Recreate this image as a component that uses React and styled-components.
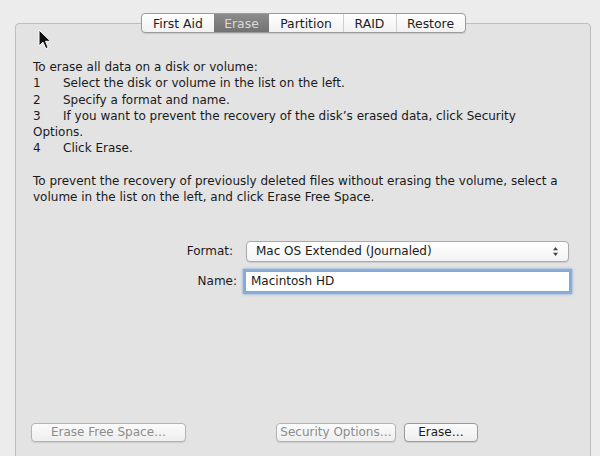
import React from 'react'
import styled, { createGlobalStyle } from 'styled-components'

const Global = createGlobalStyle`
    html, body {
        margin: 0;
        padding: 0;
        background: #ececec;
        overflow: hidden;
    }
    body {
        font-family: "DejaVu Sans", "Liberation Sans", sans-serif;
        color: #1a1a1a;
    }
`

const Page = styled.div`
    position: relative;
    width: 600px;
    height: 456px;
    padding: 13px 9px 0 15px;
    box-sizing: border-box;
    display: flex;
    flex-direction: column;
`

const TabBar = styled.div`
    display: flex;
    justify-content: center;
    margin-bottom: -10px;
    position: relative;
    z-index: 1;
`

const Segmented = styled.div`
    display: flex;
    height: 20px;
    border: 1px solid #9b9b9b;
    border-radius: 4px;
    background: linear-gradient(#ffffff, #f1f1f1);
    box-shadow: 0 1px 1px rgba(0, 0, 0, 0.12);
    overflow: hidden;
    box-sizing: border-box;
`

const Tab = styled.div`
    display: flex;
    align-items: center;
    justify-content: center;
    width: ${p => p.$w}px;
    font-size: 12.4px;
    color: ${p => (p.$active ? '#d9d9d9' : '#1c1c1c')};
    background: ${p => (p.$active ? 'linear-gradient(#8c8c8c, #727272)' : 'transparent')};
    border-left: 1px solid ${p => (p.$first || p.$active || p.$afterActive ? 'transparent' : '#cfcfcf')};
    box-sizing: border-box;
`

const Panel = styled.div`
    flex: 1;
    margin-bottom: -20px;
    border: 1px solid #bdbdbd;
    border-radius: 4px;
    background: #e3e3e3;
    padding: 35px 0 0 17px;
    display: flex;
    flex-direction: column;
`

const Info = styled.div`
    font-size: 12px;
    line-height: 16.3px;
    white-space: nowrap;
`

const Line = styled.div`
    min-height: 16.3px;
`

const Num = styled.span`
    display: inline-block;
    width: 30px;
`

const Form = styled.div`
    margin-top: 35px;
    display: grid;
    grid-template-columns: 200px 323px;
    column-gap: 13px;
    row-gap: 9px;
    align-items: center;
`

const Label = styled.div`
    font-size: 12px;
    text-align: right;
    margin-right: ${p => p.$shift || 0}px;
`

const Select = styled.div`
    height: 19px;
    border: 1px solid #a9a9a9;
    border-radius: 4px;
    background: linear-gradient(#ffffff, #f3f3f3);
    box-shadow: 0 1px 1px rgba(0, 0, 0, 0.1);
    display: flex;
    align-items: center;
    justify-content: space-between;
    padding: 0 9px 0 9px;
    font-size: 12px;
`

const Input = styled.div`
    height: 19px;
    margin-left: -1px;
    margin-right: -1px;
    border: 1px solid #8fa7c4;
    background: #ffffff;
    box-shadow: 0 0 1px 2px #86aedc, 0 0 3px 2px rgba(110, 150, 210, 0.6);
    display: flex;
    align-items: center;
    padding-left: 5px;
    font-size: 12px;
`

const Buttons = styled.div`
    margin-top: 131px;
    display: flex;
    align-items: center;
`

const Button = styled.div`
    width: ${p => p.$w}px;
    height: 19px;
    margin-left: ${p => p.$ml || 0}px;
    border: 1px solid ${p => (p.$disabled ? '#b3b3b3' : '#9a9a9a')};
    border-radius: 4px;
    background: linear-gradient(#fbfbfb, #eeeeee);
    box-shadow: 0 1px 1px rgba(0, 0, 0, 0.1);
    display: flex;
    align-items: center;
    justify-content: center;
    font-size: 12px;
    color: ${p => (p.$disabled ? '#8c8c8c' : '#1c1c1c')};
    box-sizing: border-box;
`

const Cursor = styled.svg`
    position: absolute;
    left: 38px;
    top: 29px;
`

const tabs = [
    { label: 'First Aid', w: 72 },
    { label: 'Erase', w: 55, active: true },
    { label: 'Partition', w: 74 },
    { label: 'RAID', w: 53 },
    { label: 'Restore', w: 69 },
]

const Arrows = () => (
    <svg width="7" height="11" viewBox="0 0 7 11">
        <path d="M3.5 1 L6 4.2 H1 Z" fill="#444" />
        <path d="M3.5 10 L6 6.8 H1 Z" fill="#444" />
    </svg>
)

export default function App() {
    return (
        <Page>
            <Global />
            <TabBar>
                <Segmented>
                    {tabs.map((t, i) => (
                        <Tab
                            key={t.label}
                            $w={t.w}
                            $first={i === 0}
                            $active={t.active}
                            $afterActive={i > 0 && tabs[i - 1].active}
                        >
                            {t.label}
                        </Tab>
                    ))}
                </Segmented>
            </TabBar>
            <Panel>
                <Info>
                    <Line>To erase all data on a disk or volume:</Line>
                    <Line><Num>1</Num>Select the disk or volume in the list on the left.</Line>
                    <Line><Num>2</Num>Specify a format and name.</Line>
                    <Line><Num>3</Num>If you want to prevent the recovery of the disk’s erased data, click Security</Line>
                    <Line>Options.</Line>
                    <Line><Num>4</Num>Click Erase.</Line>
                    <Line />
                    <Line>To prevent the recovery of previously deleted files without erasing the volume, select a</Line>
                    <Line>volume in the list on the left, and click Erase Free Space.</Line>
                </Info>
                <Form>
                    <Label>Format:</Label>
                    <Select>
                        <span>Mac OS Extended (Journaled)</span>
                        <Arrows />
                    </Select>
                    <Label $shift={-4}>Name:</Label>
                    <Input>Macintosh HD</Input>
                </Form>
                <Buttons>
                    <Button $w={155} $ml={-2} $disabled>Erase Free Space…</Button>
                    <Button $w={120} $ml={90} $disabled>Security Options…</Button>
                    <Button $w={74} $ml={8}>Erase…</Button>
                </Buttons>
            </Panel>
            <Cursor width="14" height="22" viewBox="0 0 14 22">
                <path d="M1 1 L1 17 L5 13.2 L7.8 19.6 L10.2 18.6 L7.5 12.3 L12.6 12.3 Z" fill="#111" stroke="#fff" strokeWidth="1" strokeLinejoin="round" />
            </Cursor>
        </Page>
    )
}
